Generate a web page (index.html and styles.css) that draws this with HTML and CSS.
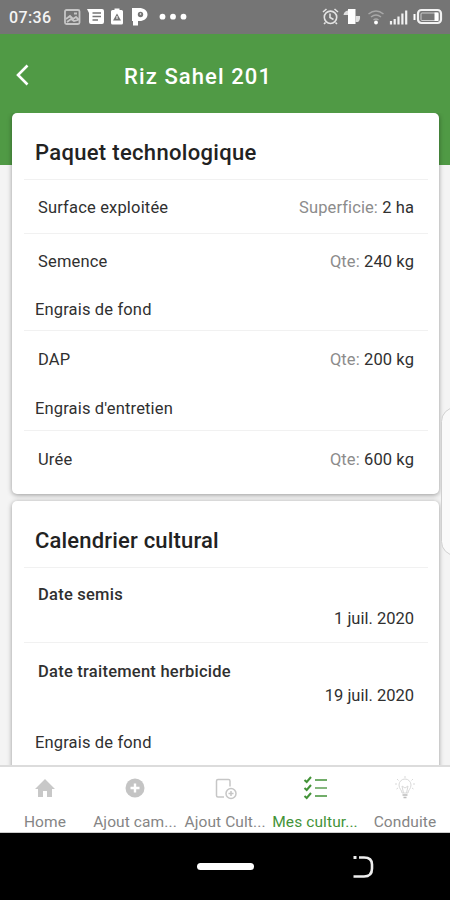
FILE: index.html
```html
<!DOCTYPE html>
<html lang="fr">
<head>
<meta charset="utf-8">
<title>Riz Sahel 201</title>
<link rel="stylesheet" href="styles.css">
</head>
<body>
<div class="phone">
  <div class="status">
    <span class="clock">07:36</span>
    <svg class="status-left" width="126" height="20" viewBox="0 0 126 20">
      <g fill="none" stroke="#c6c6c6" stroke-width="1.800"><rect x="2" y="3" width="14.500" height="14" rx="1.500"/><path d="M3 12l4-3 3 3 3-2 3 3M4 15l4-3 3 2 4-1M11 6.500h3"/></g>
      <path fill="#fff" d="M24 2h15q2 0 2 2v11q0 2-2 2H28q-2 0-2-2V6z"/>
      <path stroke="#757575" stroke-width="1.600" d="M29.500 6h8.500M29.500 9.500h8.500M29.500 13h5.500"/>
      <path fill="#fff" d="M51.500 1.500h5V3h2q1.500 0 1.500 1.500V16q0 1.500-1.500 1.500h-9Q48 17.500 48 16V4.500Q48 3 49.500 3h2z"/>
      <path fill="#757575" d="M54 6.500l4 7h-8z"/><path stroke="#fff" d="M54 9v3"/>
      <path fill="#fff" d="M69 1h7c5 0 8.500 2.500 8.500 6.500S81 14 76.500 14H75v4.500h-5V14h-1z"/>
      <circle cx="77.500" cy="7.500" r="2.700" fill="#757575"/><circle cx="77.500" cy="7" r=".8" fill="#fff"/>
      <g fill="#fff"><circle cx="99.500" cy="9.700" r="2.900"/><circle cx="110" cy="9.700" r="2.900"/><circle cx="120.500" cy="9.700" r="2.900"/></g>
    </svg>
    <svg class="status-right" width="122" height="20" viewBox="0 0 122 20">
      <g fill="none" stroke="#e3e3e3" stroke-width="1.600"><circle cx="9.500" cy="10.300" r="6.200"/><path d="M9 6.500v4l3.500 2M2 5l3.500-3M17 5l-3.500-3M4.500 15.500L3 17M14.500 15.500L16 17"/></g>
      <path fill="#fff" d="M27 2h7.500v15H27z"/><path fill="#e0e0e0" d="M27 3.500q-4 .5-4.500 4.500H27zM34.500 9h4.500q.5 4-2 6h-2.500z"/>
      <g fill="none" stroke="#a8a8a8" stroke-width="1.500"><path d="M47.500 7q7.500-6 15 0M50 10q5-4 10 0M52.500 13q2.500-2 5 0"/></g><circle cx="55" cy="15.500" r="1.900" fill="#fff"/>
      <path stroke="#f2f2f2" stroke-width="2.200" d="M70 14v3.500M73.700 12v5.500M77.500 9.500v8M81.400 6.500v11M85.200 3.500v14"/>
      <rect x="97" y="3" width="23" height="13" rx="3.500" fill="none" stroke="#f2f2f2" stroke-width="2.200"/>
      <rect x="100" y="6" width="17" height="7.500" rx="1" fill="none" stroke="#ccc"/>
      <path fill="#fff" d="M113.500 5.500h4v8.500h-4zM92.500 7h2v6h-2z"/>
    </svg>
  </div>

  <header class="appbar">
    <svg class="back" width="16" height="24" viewBox="0 0 16 24"><path d="M13.500 1.500L4 11l9.500 9.500" fill="none" stroke="#fff" stroke-width="2.600"/></svg>
    <h1>Riz Sahel 201</h1>
  </header>

  <main class="content">
    <section class="card package">
      <h2>Paquet technologique</h2>
      <div class="row"><span>Surface exploitée</span><span class="value"><span class="label">Superficie:</span> 2 ha</span></div>
      <div class="row open"><span>Semence</span><span class="value"><span class="label">Qte:</span> 240 kg</span></div>
      <h3>Engrais de fond</h3>
      <div class="row fertilizer"><span>DAP</span><span class="value"><span class="label">Qte:</span> 200 kg</span></div>
      <h3>Engrais d'entretien</h3>
      <div class="row fertilizer"><span>Urée</span><span class="value"><span class="label">Qte:</span> 600 kg</span></div>
    </section>
    <section class="card calendar">
      <h2>Calendrier cultural</h2>
      <div class="event"><span class="task">Date semis</span><time>1 juil. 2020</time></div>
      <div class="event last"><span class="task">Date traitement herbicide</span><time>19 juil. 2020</time></div>
      <h3>Engrais de fond</h3>
    </section>
    <div class="handle"></div>
  </main>

  <nav class="tabs">
    <div class="tab"><svg width="24" height="24" viewBox="0 0 24 24"><path fill="#c8c8c8" d="M10 21v-6h4v6h5v-8h3L12 3 2 13h3v8z"/></svg><span>Home</span></div>
    <div class="tab"><svg width="24" height="24" viewBox="0 0 24 24"><circle cx="12" cy="12" r="9.500" fill="#c4c4c4"/><path stroke="#fff" stroke-width="2.400" d="M12 7.500v9M7.500 12h9"/></svg><span>Ajout cam...</span></div>
    <div class="tab"><svg width="24" height="24" viewBox="0 0 24 24"><g fill="none" stroke="#c6c6c6" stroke-width="1.500"><path d="M11 21H5q-1.500 0-1.500-1.500V5Q3.500 3.500 5 3.500h10.500q1.500 0 1.500 1.500v5.500"/><circle cx="18" cy="17.500" r="5"/><path d="M18 15v5M15.500 17.500h5"/></g></svg><span>Ajout Cult...</span></div>
    <div class="tab active"><svg width="24" height="24" viewBox="0 0 24 24"><g fill="none" stroke="#439338" stroke-width="2"><path d="M1.500 4l2.200 2L8 1M1.500 12l2.200 2L8 9M1.500 20l2.200 2L8 17"/><path stroke-width="1.600" d="M12 4H24M12 20H24"/><path stroke="#85b77e" stroke-width="2" d="M12 12H24"/></g></svg><span>Mes cultur...</span></div>
    <div class="tab"><svg width="24" height="24" viewBox="0 0 24 24"><g fill="none" stroke="#d9d9d9" stroke-width="1"><path d="M9 17c0-3-3-4-3-8a6 6 0 0 1 12 0c0 4-3 5-3 8zM10.500 17l-1.500-7 3 2 3-2-1.500 7M2 8h2M20 8h2M4 3l1.500 1.500M20 3l-1.500 1.500M3.500 13l1.500-1M20.500 13L19 12M12 0v2"/><path stroke="#bcbcbc" stroke-width="1.600" d="M9.500 19h5M10.500 21.500h3"/></g></svg><span>Conduite</span></div>
  </nav>

  <div class="system">
    <div class="pill"></div>
    <svg class="recent" width="24" height="24" viewBox="0 0 24 24"><path fill="none" stroke="#eee" stroke-width="2.600" d="M8 2.500h5q8 0 8 7v4q0 8-8 8H2.500"/><path fill="#eee" d="M2.500 1h3v3h-3z"/></svg>
  </div>
</div>
</body>
</html>
```

FILE: styles.css
```css
* { box-sizing: border-box; }
body { margin: 0; font-family: Roboto, "Liberation Sans", sans-serif; color: #303030; }
h1, h2, h3 { margin: 0; font-weight: 400; }
svg { display: block; flex: none; }

.phone { width: 450px; height: 900px; display: flex; flex-direction: column; overflow: hidden; background: #f4f4f4; }

.status { height: 34px; flex: none; display: flex; align-items: center; padding: 0 7px 0 9px; background: #757575; color: #f4f4f4; }
.clock { width: 54px; font-size: 16px; font-weight: 500; letter-spacing: 0.4px; padding-top: 1px; }
.status-right { margin-left: auto; }

.appbar { height: 131px; flex: none; display: grid; grid-template-columns: 110px 1fr; align-items: center; padding: 0 0 48px 14px; background: #509a45; color: #fff; }
.appbar h1 { font-size: 22px; font-weight: 500; letter-spacing: 1.1px; padding-top: 2px; }

.content { position: relative; flex: 1; min-height: 0; margin-top: -52px; padding: 0 11px 0 12px; display: flex; flex-direction: column; gap: 7px; overflow: hidden; }
.card { flex: none; background: #fff; border-radius: 5px; padding: 0 11px 0 12px; box-shadow: 0 1px 5px rgba(0, 0, 0, 0.38); }
.package { height: 381px; }
.calendar { height: 300px; }
.card h2 { height: 67px; display: flex; align-items: center; padding: 13px 0 0 11px; border-bottom: 1px solid #f1f1f1; font-size: 22px; font-weight: 500; letter-spacing: 0.32px; color: #222; }
.calendar h2 { padding-top: 12px; letter-spacing: 0.18px; }

.row { height: 54px; display: flex; align-items: center; justify-content: space-between; padding: 1px 14px 0; border-bottom: 1px solid #f1f1f1; font-size: 16.5px; letter-spacing: 0.17px; }
.row.open, .row.fertilizer { border-bottom: 0; }
.row.fertilizer { height: 56px; }
.value { letter-spacing: 0.1px; }
.label { color: #8c8c8c; }
.card h3 { height: 43px; display: flex; align-items: center; padding: 0 0 0 11px; border-bottom: 1px solid #f1f1f1; font-size: 16.5px; letter-spacing: 0.15px; }
.fertilizer + h3 { height: 44px; }
.calendar h3 { border: 0; padding-top: 4px; }

.event { height: 75px; display: flex; flex-direction: column; justify-content: space-between; padding: 16px 14px 12px; border-bottom: 1px solid #f1f1f1; font-size: 16.5px; line-height: 22px; }
.task { font-weight: 500; letter-spacing: 0.24px; }
.event time { align-self: flex-end; }
.event.last { border: 0; height: 76px; padding: 18px 14px 12px; }

.handle { position: absolute; right: -20px; top: 294px; width: 29px; height: 149px; border: 1px solid #d0d0d0; border-radius: 15px; background: #fafafa; }

.tabs { height: 68px; flex: none; display: grid; grid-template-columns: repeat(5, 90px); background: #fff; border-top: 2px solid #dcdcdc; border-bottom: 1px solid #ccc; }
.tab { display: flex; flex-direction: column; align-items: center; gap: 11px; padding-top: 9px; font-size: 15.5px; line-height: 22px; letter-spacing: 0.1px; color: #858585; white-space: nowrap; }
.tab.active { color: #439338; }

.system { height: 67px; flex: none; background: #000; display: grid; grid-template-columns: 197px 154px 1fr; align-items: center; }
.pill { grid-column: 2; width: 57px; height: 7px; border-radius: 4px; background: #fff; }
```
